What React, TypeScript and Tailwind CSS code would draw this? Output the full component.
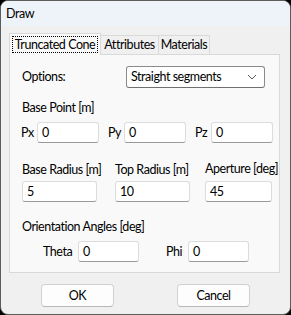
import React from "react";

const font = { fontFamily: 'Lato, "Liberation Sans", sans-serif' };

function Input({ value, w }: { value: string; w: string }) {
  return (
    <div
      className={`${w} h-[21px] shrink-0 bg-white border border-[#dcdcdc] border-b-[#9a9a9a] rounded-[3px] flex items-center pl-[4px] text-black`}
    >
      {value}
    </div>
  );
}

export default function App() {
  return (
    <div className="w-[291px] h-[315px] bg-black whitespace-nowrap" style={font}>
      <div className="w-full h-full rounded-[8px] border border-[#5c5c5c] overflow-hidden flex flex-col bg-[#f0f0f0] text-[12.5px] tracking-[-0.45px] text-black leading-[16px]">
        <div className="h-[25px] bg-[#eef3f9] pl-[5px] flex items-center">Draw</div>
        <div className="pl-[8px] pt-[7px]">
          <div className="flex items-end h-[22px] relative z-10">
            <div className="h-[22px] w-[92px] bg-[#f9f9f9] border border-[#d9d9d9] border-b-0 flex items-start pt-[2px] px-[2px]">
              <div className="border border-dotted border-black w-full h-[17px] flex items-center justify-center">
                Truncated Cone
              </div>
            </div>
            <div className="h-[20px] w-[58px] bg-[#f0f0f0] border border-[#d9d9d9] border-l-0 flex items-center justify-center">
              Attributes
            </div>
            <div className="h-[20px] w-[51px] bg-[#f0f0f0] border border-[#d9d9d9] border-l-0 flex items-center justify-center">
              Materials
            </div>
          </div>
          <div className="w-[271px] h-[219px] -mt-px bg-[#f9f9f9] border border-[#d9d9d9]">
            <div className="mt-[11px] flex items-center h-[22px]">
              <div className="ml-[12px] w-[104px]">Options:</div>
              <div className="w-[139px] h-[22px] bg-white border border-[#8a8a8a] border-b-[#6f6f6f] rounded-[3px] flex items-center justify-between pl-[4px] pr-[7px]">
                <span>Straight segments</span>
                <svg width="10" height="6" viewBox="0 0 10 6">
                  <path d="M1 1 L5 5 L9 1" fill="none" stroke="#5a5a5a" strokeWidth="1" />
                </svg>
              </div>
            </div>
            <div className="mt-[12px] ml-[12px]">Base Point [m]</div>
            <div className="mt-[6px] flex items-center">
              <div className="ml-[11px] w-[16px]">Px</div>
              <Input value="0" w="w-[62px]" />
              <div className="ml-[9px] w-[16px]">Py</div>
              <Input value="0" w="w-[62px]" />
              <div className="ml-[9px] w-[16px]">Pz</div>
              <Input value="0" w="w-[62px]" />
            </div>
            <div className="mt-[19px] flex">
              <div className="ml-[12px] w-[93px]">Base Radius [m]</div>
              <div className="w-[90px]">Top Radius [m]</div>
              <div className="-mt-[1px]">Aperture [deg]</div>
            </div>
            <div className="mt-[3px] flex">
              <div className="ml-[12px] w-[93px]">
                <Input value="5" w="w-[75px]" />
              </div>
              <div className="w-[90px]">
                <Input value="10" w="w-[75px]" />
              </div>
              <Input value="45" w="w-[67px]" />
            </div>
            <div className="mt-[17px] ml-[12px]">Orientation Angles [deg]</div>
            <div className="mt-[6px] flex items-center">
              <div className="ml-[33px] w-[35px]">Theta</div>
              <Input value="0" w="w-[61px]" />
              <div className="ml-[27px] w-[22px]">Phi</div>
              <Input value="0" w="w-[61px]" />
            </div>
          </div>
        </div>
        <div className="mt-[11px] flex">
          <div className="ml-[40px] w-[73px] h-[23px] bg-[#fdfdfd] border border-[#d0d0d0] border-b-[#b8b8b8] rounded-[4px] flex items-center justify-center">
            OK
          </div>
          <div className="ml-[63px] w-[73px] h-[23px] bg-[#fdfdfd] border border-[#d0d0d0] border-b-[#b8b8b8] rounded-[4px] flex items-center justify-center">
            Cancel
          </div>
        </div>
      </div>
    </div>
  );
}
